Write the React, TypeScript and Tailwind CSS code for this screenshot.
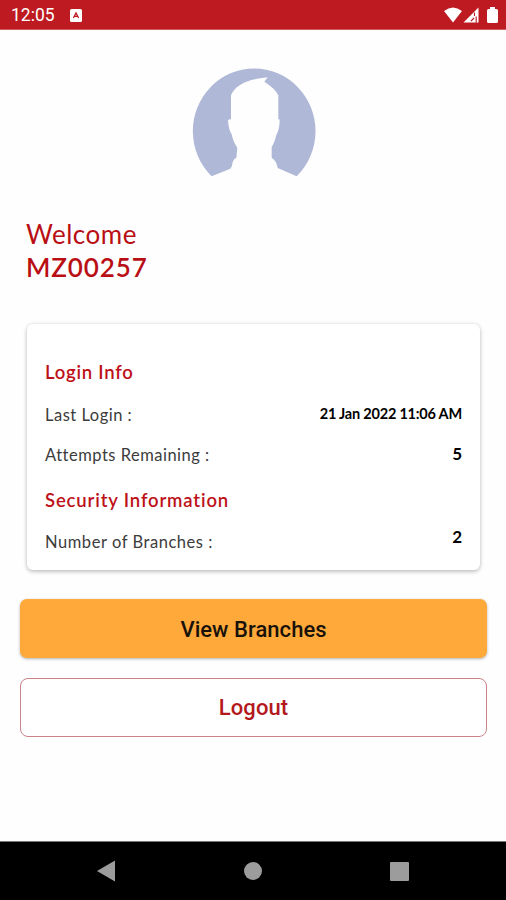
import type { ReactNode } from 'react'

function StatusBar() {
  return (
    <header className="flex h-[30px] shrink-0 items-center justify-between border-b border-[#d25a60] bg-[#bd1a22] pl-[11px] pr-2 pt-[2px] text-white">
      <div className="flex items-center gap-[15px]">
        <span className="pt-px font-['Roboto',sans-serif] text-[17.5px] leading-none">12:05</span>
        <svg width="12" height="13" viewBox="0 0 12 13">
          <rect width="12" height="13" rx="1.5" fill="#fff" />
          <path d="M3.4 9 L6 4 L8.6 9 M4.6 7.4 H7.4" fill="none" stroke="#bd1a22" strokeWidth="1.3" />
        </svg>
      </div>
      <div className="flex items-center pb-px">
        <svg width="20" height="16" viewBox="0 0 20 16">
          <path d="M1 4 Q10 -3 19 4 L10 15.5 Z" fill="#fff" />
        </svg>
        <svg width="17" height="16" viewBox="0 0 17 16">
          <path d="M0.5 15.5 L15.5 0.5 V15.5 Z" fill="#fff" />
          <path d="M11.5 5.5 V9 M8 14 L11 11 M13.2 9.5 V15.5" stroke="#bd1a22" strokeWidth="1.1" />
        </svg>
        <svg className="ml-[7px]" width="11" height="16" viewBox="0 0 11 16">
          <path d="M3 0 H8 V2 H9.5 Q11 2 11 3.5 V14.5 Q11 16 9.5 16 H1.5 Q0 16 0 14.5 V3.5 Q0 2 1.5 2 H3 Z" fill="#fff" />
        </svg>
      </div>
    </header>
  )
}

function Avatar() {
  return (
    <svg className="ml-[179.5px] block" width="150" height="130" viewBox="0 0 450 390">
      <path d="M95 346 A184 188 0 1 1 350 346 L293 321 Q290 303 282 296 L275 290 V259 Q284 244 289 222 Q299 205 299 176 L295 174 V103 Q286 83 253 62 L263 49 C205 55 167 70 153 103 V174 L144 177 Q146 207 155 220 Q160 244 172 260 L169 290 Q160 294 158 304 Q157 316 151 323 Z" fill="#afb8d6" />
    </svg>
  )
}

interface InfoRowProps {
  label: ReactNode
  value: string
  className: string
  labelClassName: string
  valueClassName: string
}

function InfoRow({ label, value, className, labelClassName, valueClassName }: InfoRowProps) {
  return (
    <div className={`flex justify-between whitespace-nowrap leading-5 ${className}`}>
      <span className={`text-[16.5px] text-[#3c3c3c] ${labelClassName}`}>{label}</span>
      <span className={`font-bold text-black ${valueClassName}`}>{value}</span>
    </div>
  )
}

function InfoCard() {
  return (
    <section className="ml-[27px] mr-[26px] mt-[40px] h-[246px] rounded-[6px] bg-white pl-[18px] pr-[18px] pt-[38px] font-['Lato',sans-serif] shadow-[0_2px_4px_rgba(0,0,0,0.2),0_0_4px_rgba(0,0,0,0.1)]">
      <h2 className="text-[18.5px] font-semibold leading-5 tracking-[0.75px] text-[#bd1118]">Login Info</h2>
      <InfoRow
        label="Last Login :"
        value="21 Jan 2022 11:06 AM"
        className="mt-[22px]"
        labelClassName="pt-px tracking-[0.5px]"
        valueClassName="text-[14.5px] tracking-[-0.2px]"
      />
      <InfoRow
        label="Attempts Remaining :"
        value="5"
        className="mt-[19px]"
        labelClassName="pt-px tracking-[0.5px]"
        valueClassName="text-[17px]"
      />
      <h2 className="mt-[25px] text-[18.5px] font-semibold leading-5 tracking-[0.85px] text-[#bd1118]">
        Security Information
      </h2>
      <InfoRow
        label="Number of Branches :"
        value="2"
        className="mt-[17px]"
        labelClassName="pt-[5px] tracking-[0.55px]"
        valueClassName="text-[17px]"
      />
    </section>
  )
}

function NavBar() {
  return (
    <nav className="flex h-[59px] shrink-0 items-center justify-between border-t border-[#777] bg-black pl-[96px] pr-[97px]">
      <svg width="20" height="22" viewBox="0 0 20 22">
        <path d="M1 11 L19 0.5 V21.5 Z" fill="#9c9c9c" />
      </svg>
      <span className="size-[18px] rounded-full bg-[#9c9c9c]" />
      <span className="size-[19px] rounded-[1px] bg-[#9c9c9c]" />
    </nav>
  )
}

export default function App() {
  return (
    <div className="flex h-[900px] w-[506px] flex-col overflow-hidden bg-[#fefefe]">
      <StatusBar />
      <main className="flex-1 pt-[31px]">
        <Avatar />
        <div className="ml-[26px] mt-[26px] whitespace-nowrap font-['Lato',sans-serif] text-[26px] leading-[34px] text-[#b90f14]">
          <p className="tracking-[0.5px]">Welcome</p>
          <p className="-mt-px mb-px font-semibold tracking-[0.9px]">MZ00257</p>
        </div>
        <InfoCard />
        <div className="ml-[20px] mr-[19px] mt-[29px] flex flex-col gap-[20px] font-['Roboto',sans-serif] text-[22px] font-medium">
          <button className="h-[59px] rounded-[7px] bg-[#ffa93b] pt-px tracking-[0.05px] text-[#19120a] shadow-[0_1px_3px_rgba(0,0,0,0.3)]">
            View Branches
          </button>
          <button className="h-[59px] rounded-[8px] border border-[#cc8388] bg-white tracking-[0.1px] text-[#b3181d]">
            Logout
          </button>
        </div>
      </main>
      <NavBar />
    </div>
  )
}
